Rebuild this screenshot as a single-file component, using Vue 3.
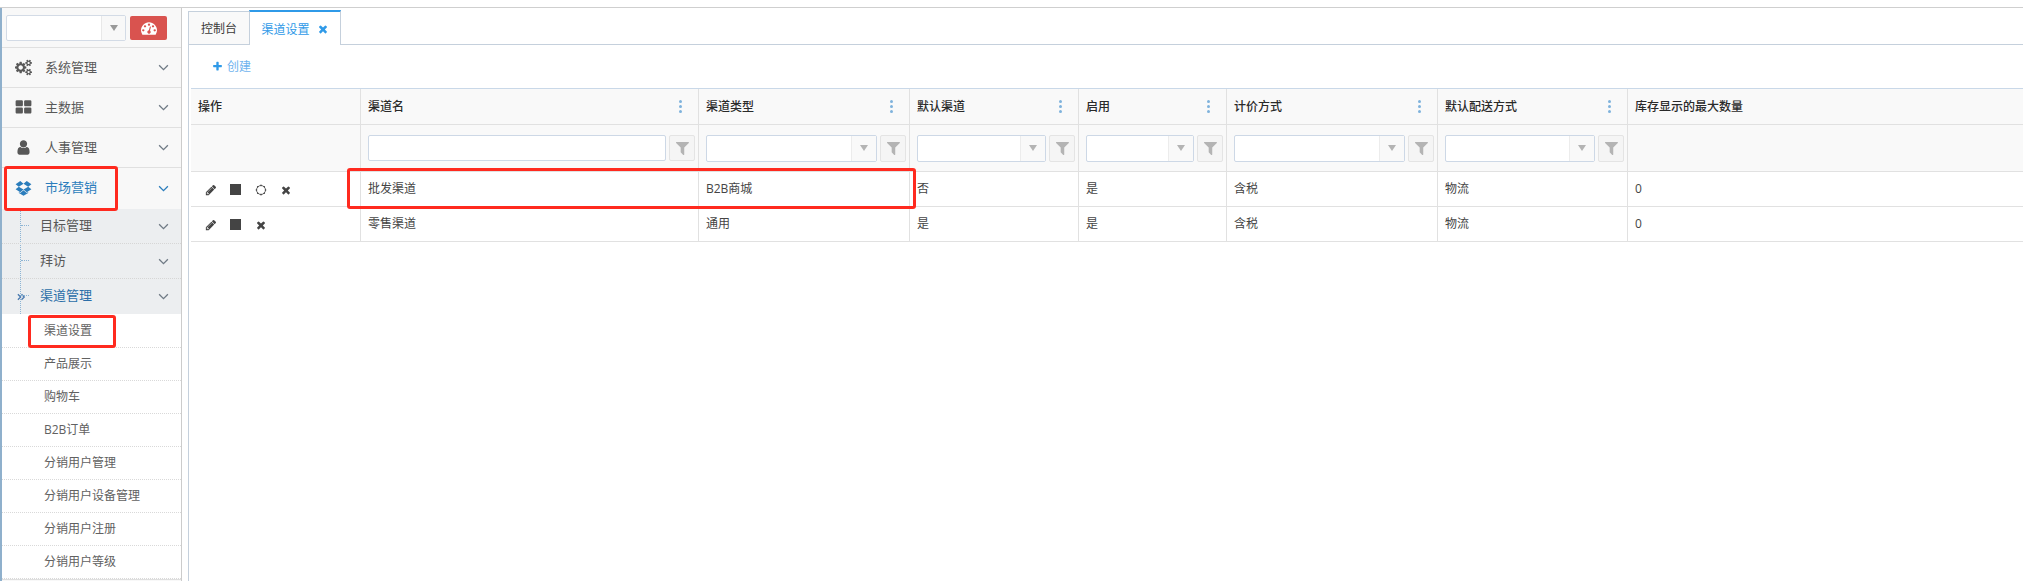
<script setup>
const P = {
  pencil: 'M491 1536l91-91-235-235-91 91v107h128v128h107zm523-928q0-22-22-22-10 0-17 7l-542 542q-7 7-7 17 0 22 22 22 10 0 17-7l542-542q7-7 7-17zm-54-192l416 416-832 832h-416v-416zm683 96q0 53-37 90l-166 166-416-416 166-165q36-38 90-38 53 0 91 38l235 234q37 39 37 91z',
  times: 'M1490 1322q0 40-28 68l-136 136q-28 28-68 28t-68-28l-294-294-294 294q-28 28-68 28t-68-28l-136-136q-28-28-28-68t28-68l294-294-294-294q-28-28-28-68t28-68l136-136q28-28 68-28t68 28l294 294 294-294q28-28 68-28t68 28l136 136q28 28 28 68t-28 68l-294 294 294 294q28 28 28 68z',
  filter: 'M1595 295q17 41-14 70l-493 493v742q0 42-39 59-13 5-25 5-27 0-45-19l-256-256q-19-19-19-45v-486l-493-493q-31-29-14-70 17-39 59-39h1280q42 0 59 39z',
  plus: 'M1600 736v192q0 40-28 68t-68 28h-416v416q0 40-28 68t-68 28h-192q-40 0-68-28t-28-68v-416h-416q-40 0-68-28t-28-68v-192q0-40 28-68t68-28h416v-416q0-40 28-68t68-28h192q40 0 68 28t28 68v416h416q40 0 68 28t28 68z',
  user: 'M1536 1399q0 109-62.5 187t-150.5 78h-854q-88 0-150.5-78t-62.5-187q0-85 8.5-160.5t31.5-152 58.5-131 94-89 134.5-34.5q131 128 313 128t313-128q76 0 134.5 34.500t94 89 58.5 131 31.5 152 8.5 160.5zm-256-887q0 159-112.5 271.5t-271.5 112.5-271.5-112.5-112.5-271.5 112.5-271.5 271.5-112.5 271.5 112.5 112.5 271.5z',
  th: 'M832 1024v384q0 52-38 90t-90 38h-512q-52 0-90-38t-38-90v-384q0-52 38-90t90-38h512q52 0 90 38t38 90zm0-768v384q0 52-38 90t-90 38h-512q-52 0-90-38t-38-90v-384q0-52 38-90t90-38h512q52 0 90 38t38 90zm896 768v384q0 52-38 90t-90 38h-512q-52 0-90-38t-38-90v-384q0-52 38-90t90-38h512q52 0 90 38t38 90zm0-768v384q0 52-38 90t-90 38h-512q-52 0-90-38t-38-90v-384q0-52 38-90t90-38h512q52 0 90 38t38 90z',
  dropbox: 'M402 707l494 305-342 285-490-319zm986 555v108l-490 293v1l-1-1-1 1v-1l-489-293v-108l147 96 342-284v-2l1 1 1-1v2l343 284zm-834-1144l342 285-494 304-338-270zm836 589l338 271-489 319-343-285zm-151-589l489 319-338 270-494-304z',
  cogs: 'M896 896q0-106-75-181t-181-75-181 75-75 181 75 181 181 75 181-75 75-181zm768 512q0-52-38-90t-90-38-90 38-38 90q0 53 37.5 90.5t90.5 37.5 90.5-37.5 37.5-90.5zm0-1024q0-52-38-90t-90-38-90 38-38 90q0 53 37.5 90.5t90.5 37.5 90.5-37.5 37.5-90.5zm-384 421v185q0 10-7 19.5t-16 10.5l-155 24q-11 35-32 76 34 48 90 115 7 11 7 20 0 12-7 19-23 30-82.5 89.5t-78.5 59.5q-11 0-21-7l-115-90q-37 19-77 31-11 108-23 155-7 24-30 24h-186q-11 0-20-7.5t-10-17.5l-23-153q-34-10-75-31l-118 89q-7 7-20 7-11 0-21-8-144-133-144-160 0-9 7-19 10-14 41-53t47-61q-23-44-35-82l-152-24q-10-1-17-9.5t-7-19.5v-185q0-10 7-19.5t16-10.5l155-24q11-35 32-76-34-48-90-115-7-11-7-20 0-12 7-20 22-30 82-89t79-59q11 0 21 7l115 90q34-18 77-32 11-108 23-154 7-24 30-24h186q11 0 20 7.5t10 17.5l23 153q34 10 75 31l118-89q8-7 20-7 11 0 21 8 144 133 144 160 0 8-7 19-12 16-42 54t-45 60q23 48 34 82l152 23q10 2 17 10.5t7 19.5zm640 533v140q0 16-149 31-12 27-30 52 51 113 51 138 0 4-4 7-122 71-124 71-8 0-46-47t-52-68q-20 2-30 2t-30-2q-14 21-52 68t-46 47q-2 0-124-71-4-3-4-7 0-25 51-138-18-25-30-52-149-15-149-31v-140q0-16 149-31 13-29 30-52-51-113-51-138 0-4 4-7 4-2 35-20t59-34 30-16q8 0 46 46.5t52 67.5q20-2 30-2t30 2q51-71 92-112l6-2q4 0 124 70 4 3 4 7 0 25-51 138 17 23 30 52 149 15 149 31zm0-1024v140q0 16-149 31-12 27-30 52 51 113 51 138 0 4-4 7-122 71-124 71-8 0-46-47t-52-68q-20 2-30 2t-30-2q-14 21-52 68t-46 47q-2 0-124-71-4-3-4-7 0-25 51-138-18-25-30-52-149-15-149-31v-140q0-16 149-31 13-29 30-52-51-113-51-138 0-4 4-7 4-2 35-20t59-34 30-16q8 0 46 46.5t52 67.5q20-2 30-2t30 2q51-71 92-112l6-2q4 0 124 70 4 3 4 7 0 25-51 138 17 23 30 52 149 15 149 31z',
  gauge: 'M384 1152q0-53-37.5-90.5t-90.5-37.5-90.5 37.5-37.5 90.5 37.5 90.5 90.5 37.5 90.5-37.5 37.5-90.5zm192-448q0-53-37.5-90.5t-90.5-37.5-90.5 37.5-37.5 90.5 37.5 90.5 90.5 37.5 90.5-37.5 37.5-90.5zm428 481l101-382q6-26-7.5-48.5t-38.5-29.5-48 6.5-30 39.5l-101 382q-60 5-107 43.5t-63 98.5q-20 77 20 146t117 89 146-20 89-117q16-60-6-117t-72-91zm660-33q0-53-37.5-90.5t-90.5-37.5-90.5 37.5-37.5 90.5 37.5 90.5 90.5 37.5 90.5-37.5 37.5-90.5zm-640-640q0-53-37.5-90.5t-90.5-37.5-90.5 37.5-37.5 90.5 37.5 90.5 90.5 37.5 90.5-37.5 37.5-90.5zm448 192q0-53-37.5-90.5t-90.5-37.5-90.5 37.5-37.5 90.5 37.5 90.5 90.5 37.5 90.5-37.5 37.5-90.5zm320 448q0 261-141 483-19 29-54 29h-1402q-35 0-54-29-141-221-141-483 0-182 71-348t191-286 286-191 348-71 348 71 286 191 191 286 71 348z'
}
const topMenu = [
  { label: '系统管理', icon: 'cogs', vb: '0 0 1920 1792' },
  { label: '主数据', icon: 'th', vb: '0 0 1792 1792' },
  { label: '人事管理', icon: 'user', vb: '0 0 1792 1792' }
]
const subMenu = ['目标管理', '拜访']
const leaves = ['渠道设置', '产品展示', '购物车', 'B2B订单', '分销用户管理', '分销用户设备管理', '分销用户注册', '分销用户等级']
const columns = [
  { title: '操作', w: 170, filter: 'none', menu: false },
  { title: '渠道名', w: 338, filter: 'text', menu: true },
  { title: '渠道类型', w: 211, filter: 'select', menu: true },
  { title: '默认渠道', w: 169, filter: 'select', menu: true },
  { title: '启用', w: 148, filter: 'select', menu: true },
  { title: '计价方式', w: 211, filter: 'select', menu: true },
  { title: '默认配送方式', w: 190, filter: 'select', menu: true },
  { title: '库存显示的最大数量', w: 395, filter: 'none', menu: false }
]
const rows = [
  { actions: ['pencil', 'stop', 'spin', 'times'], cells: ['批发渠道', 'B2B商城', '否', '是', '含税', '物流', '0'] },
  { actions: ['pencil', 'stop', 'times'], cells: ['零售渠道', '通用', '是', '是', '含税', '物流', '0'] }
]
const spinDots = Array.from({ length: 8 }, (_, i) => ({
  x: 7 + 5.4 * Math.cos((i * Math.PI) / 4),
  y: 7 + 5.4 * Math.sin((i * Math.PI) / 4)
}))
</script>

<template>
  <div class="page">
    <aside class="sidebar">
      <div class="shortcuts">
        <div class="combo">
          <span class="combo-text"></span>
          <span class="combo-btn"><i class="tri"></i></span>
        </div>
        <button class="gauge-btn" type="button">
          <svg viewBox="0 0 1792 1792" class="gauge"><path :d="P.gauge" fill="#fff" /></svg>
        </button>
      </div>
      <div v-for="m in topMenu" :key="m.label" class="menu-item">
        <svg :viewBox="m.vb" class="menu-icon"><path :d="P[m.icon]" /></svg>
        <span class="menu-label">{{ m.label }}</span>
        <svg viewBox="0 0 12 8" class="chev"><path d="M1 1.5l5 5 5-5" /></svg>
      </div>
      <div class="menu-item open">
        <svg viewBox="0 0 1792 1792" class="menu-icon"><path :d="P.dropbox" /></svg>
        <span class="menu-label">市场营销</span>
        <svg viewBox="0 0 12 8" class="chev"><path d="M1 1.5l5 5 5-5" /></svg>
      </div>
      <div class="submenu">
        <div v-for="s in subMenu" :key="s" class="sub-item">
          <span class="tick"></span>
          <span class="sub-label">{{ s }}</span>
          <svg viewBox="0 0 12 8" class="chev"><path d="M1 1.5l5 5 5-5" /></svg>
        </div>
        <div class="sub-item current">
          <svg viewBox="0 0 10 8" class="dbl"><path d="M1 1l3 3-3 3M5 1l3 3-3 3" /></svg>
          <span class="tick"></span>
          <span class="sub-label">渠道管理</span>
          <svg viewBox="0 0 12 8" class="chev"><path d="M1 1.5l5 5 5-5" /></svg>
        </div>
        <div class="leaves">
          <div v-for="l in leaves" :key="l" class="leaf"><span>{{ l }}</span></div>
        </div>
      </div>
    </aside>

    <main class="main">
      <div class="panel">
        <div class="tabs">
          <div class="tab">控制台</div>
          <div class="tab active">
            <span>渠道设置</span>
            <svg viewBox="0 0 1792 1792" class="tab-x"><path :d="P.times" /></svg>
          </div>
        </div>
        <div class="toolbar">
          <svg viewBox="0 0 1792 1792" class="plus"><path :d="P.plus" /></svg>
          <span>创建</span>
        </div>
        <div class="grid">
          <div class="g-row head">
            <div v-for="c in columns" :key="c.title" class="g-cell" :style="{ width: c.w + 'px' }">
              <span class="txt">{{ c.title }}</span>
              <span v-if="c.menu" class="dots"><i></i><i></i><i></i></span>
            </div>
          </div>
          <div class="g-row filters">
            <div v-for="c in columns" :key="c.title" class="g-cell" :style="{ width: c.w + 'px' }">
              <template v-if="c.filter !== 'none'">
                <div class="f-input" :class="{ plain: c.filter === 'text' }">
                  <span v-if="c.filter === 'select'" class="f-drop"><i class="tri small"></i></span>
                </div>
                <div class="f-btn" :class="{ plain: c.filter === 'text' }">
                  <svg viewBox="200 200 1400 1400"><path :d="P.filter" /></svg>
                </div>
              </template>
            </div>
          </div>
          <div v-for="r in rows" :key="r.cells[0]" class="g-row body">
            <div class="g-cell actions" :style="{ width: columns[0].w + 'px' }">
              <template v-for="a in r.actions" :key="a">
                <svg v-if="a === 'pencil'" viewBox="0 0 1792 1792" class="act"><path :d="P.pencil" /></svg>
                <span v-else-if="a === 'stop'" class="stop"></span>
                <svg v-else-if="a === 'spin'" viewBox="0 0 14 14" class="act spin">
                  <circle cx="7" cy="7" r="5.2" />
                  <circle v-for="(d, i) in spinDots" :key="i" class="spin-dot" :cx="d.x" :cy="d.y" r="0.9" />
                </svg>
                <svg v-else viewBox="0 0 1792 1792" class="act"><path :d="P.times" /></svg>
              </template>
            </div>
            <div v-for="(t, i) in r.cells" :key="i" class="g-cell" :style="{ width: columns[i + 1].w + 'px' }"><span class="txt">{{ t }}</span></div>
          </div>
        </div>
      </div>
    </main>

    <div class="mark m1"></div>
    <div class="mark m2"></div>
    <div class="mark m3"></div>
  </div>
</template>

<style>
html, body { margin: 0; background: #fff; }
</style>

<style scoped>
.page {
  position: relative;
  width: 2023px;
  height: 581px;
  overflow: hidden;
  box-sizing: border-box;
  padding-top: 7px;
  display: flex;
  background: #fff;
  font-family: "Open Sans", "Noto Sans CJK SC", sans-serif;
  font-size: 12px;
  color: #393939;
}
.page::before {
  content: "";
  position: absolute;
  left: 0;
  right: 0;
  top: 7px;
  height: 1px;
  background: #cfcfcf;
}
.sidebar {
  width: 182px;
  height: 574px;
  flex: none;
  box-sizing: border-box;
  background: #f8f8f8;
  border-left: 2px solid #8fb0cc;
  border-right: 1px solid #cccccc;
}
.shortcuts {
  height: 41px;
  box-sizing: border-box;
  padding: 7px 0 0 4px;
  display: flex;
  gap: 4px;
  border-top: 1px solid transparent;
  border-bottom: 1px solid #e0e0e0;
}
.combo {
  width: 120px;
  height: 26px;
  box-sizing: border-box;
  display: flex;
  justify-content: flex-end;
  background: #fff;
  border: 1px solid #d3dbe6;
  border-radius: 2px;
}
.combo-btn {
  width: 23px;
  background: #f8f8f8;
  border-left: 1px solid #e8e8e8;
  display: flex;
  align-items: center;
  justify-content: center;
}
.tri {
  width: 0;
  height: 0;
  border-left: 4px solid transparent;
  border-right: 4px solid transparent;
  border-top: 6px solid #999;
}
.tri.small { border-top-color: #b4b4b4; }
.gauge-btn {
  width: 37px;
  height: 24px;
  margin-top: 1px;
  padding: 0;
  border: 0;
  border-radius: 2px;
  background: #d9534f;
  display: flex;
  align-items: center;
  justify-content: center;
}
.gauge { width: 16px; height: 16px; }
.menu-item {
  height: 40px;
  box-sizing: border-box;
  padding-left: 13px;
  display: flex;
  align-items: center;
  font-size: 13px;
  color: #585858;
  border-bottom: 1px solid #e0e0e0;
}
.menu-icon { width: 17px; height: 17px; flex: none; fill: #585858; }
.menu-label { margin-left: 13px; position: relative; top: -1px; }
.chev {
  width: 11px;
  height: 7px;
  margin-left: auto;
  margin-right: 12px;
  fill: none;
  stroke: #6f7a85;
  stroke-width: 1.5;
}
.menu-item.open { color: #2b7dbc; height: 41px; border-bottom: 0; }
.menu-item.open .menu-label { top: -2px; }
.menu-item.open .menu-icon { fill: #2b7dbc; }
.menu-item.open .chev { stroke: #2b7dbc; }
.submenu { position: relative; background: #eceef0; }
.submenu::before {
  content: "";
  position: absolute;
  left: 18px;
  top: 0;
  bottom: 0;
  border-left: 1px dotted #8cb4d4;
}
.sub-item {
  position: relative;
  height: 35px;
  box-sizing: border-box;
  padding-left: 38px;
  display: flex;
  align-items: center;
  font-size: 13px;
  color: #585858;
  border-bottom: 1px dotted #d6d6d6;
}
.sub-label { position: relative; top: -2px; }
.tick {
  position: absolute;
  left: 19px;
  top: 16px;
  width: 8px;
  border-top: 1px dotted #8cb4d4;
}
.sub-item.current { color: #2b6ea8; border-bottom: 0; }
.dbl {
  position: absolute;
  left: 15px;
  top: 14px;
  width: 9px;
  height: 8px;
  fill: none;
  stroke: #4a7ab0;
  stroke-width: 1.5;
}
.leaves {
  background: #fff;
  position: relative;
  padding-top: 1px;
  border-bottom: 1px solid #dfdfdf;
}
.leaf {
  height: 33px;
  box-sizing: border-box;
  padding-left: 42px;
  display: flex;
  align-items: center;
  font-size: 12px;
  color: #616161;
  border-bottom: 1px dotted #d9d9d9;
}
.leaf span { position: relative; top: -1px; }
.main {
  flex: 1;
  min-width: 0;
  padding: 4px 0 0 6px;
}
.panel {
  height: 570px;
  box-sizing: border-box;
  border-left: 1px solid #c5d0dc;
}
.tabs {
  height: 34px;
  box-sizing: border-box;
  display: flex;
  border-bottom: 1px solid #c5d0dc;
}
.tab {
  width: 60px;
  height: 33px;
  box-sizing: border-box;
  display: flex;
  align-items: center;
  justify-content: center;
  background: #f9f9f9;
  color: #393939;
  border-top: 1px solid #c5d0dc;
}
.tab.active {
  width: 92px;
  height: 35px;
  margin-top: -1px;
  gap: 7px;
  color: #2f9ae8;
  background: #fff;
  border-top: 2px solid #2f9ae8;
  border-left: 1px solid #c5d0dc;
  border-right: 1px solid #c5d0dc;
}
.tab-x { width: 12px; height: 12px; fill: #2f9ae8; }
.toolbar {
  height: 43px;
  box-sizing: border-box;
  padding-left: 23px;
  padding-bottom: 1px;
  display: flex;
  align-items: center;
  gap: 4px;
  color: #6fb3ee;
}
.plus { width: 11px; height: 11px; fill: #2f9ae8; }
.grid {
  margin-left: 2px;
  border-top: 1px solid #c9d8e8;
}
.g-row { display: flex; border-bottom: 1px solid #e1e1e1; }
.g-cell {
  flex: none;
  box-sizing: border-box;
  padding-left: 7px;
  display: flex;
  align-items: center;
  border-right: 1px solid #e1e1e1;
}
.g-cell:last-child { border-right: 0; }
.txt { position: relative; top: -1px; }
.head { height: 35px; background: #f9f9f9; font-weight: 500; color: #2a2a2a; }
.head .g-cell { justify-content: space-between; padding-right: 16px; }
.dots { display: flex; flex-direction: column; gap: 2px; }
.dots i { width: 3px; height: 3px; border-radius: 50%; background: #7fb2dc; }
.filters { height: 46px; background: #f9f9f9; }
.filters .g-cell { gap: 3px; padding-right: 3px; }
.f-input {
  flex: 1;
  height: 27px;
  box-sizing: border-box;
  display: flex;
  justify-content: flex-end;
  background: #fff;
  border: 1px solid #cdd8e6;
  border-radius: 2px;
}
.f-input.plain { height: 26px; }
.f-drop {
  width: 24px;
  background: #f9f9f9;
  border-left: 1px solid #ececec;
  display: flex;
  align-items: center;
  justify-content: center;
}
.f-btn {
  width: 26px;
  height: 27px;
  flex: none;
  box-sizing: border-box;
  display: flex;
  align-items: center;
  justify-content: center;
  background: #f5f5f5;
  border: 1px solid #e4e4e4;
  border-radius: 2px;
}
.f-btn.plain { height: 26px; }
.f-btn svg { width: 13px; height: 14px; fill: #b4b4b4; }
.body { height: 34px; background: #fff; color: #444; }
.actions { gap: 13px; padding-left: 14px; padding-top: 1px; }
.act { width: 12px; height: 12px; flex: none; fill: #444; }
.stop { width: 11px; height: 11px; margin-right: 1px; flex: none; background: #444; }
.spin { fill: none; stroke: #444; stroke-width: 1; }
.spin .spin-dot { fill: #444; stroke: none; }
.mark {
  position: absolute;
  box-sizing: border-box;
  border: 3px solid #ff2a1f;
  border-radius: 3px;
}
.m1 { left: 4px; top: 166px; width: 114px; height: 45px; }
.m2 { left: 28px; top: 315px; width: 88px; height: 33px; }
.m3 { left: 347px; top: 168px; width: 569px; height: 41px; }
</style>
